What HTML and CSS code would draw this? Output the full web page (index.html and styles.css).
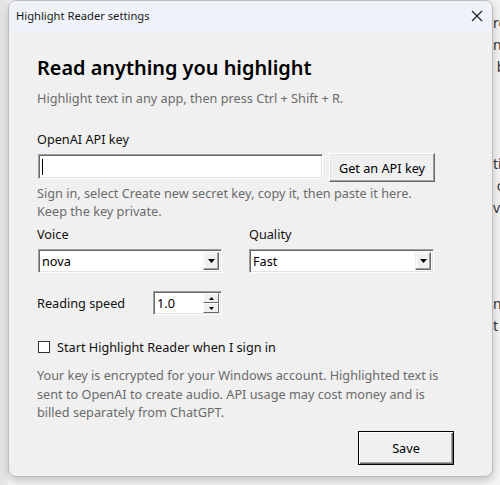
FILE: index.html
```html
<!DOCTYPE html>
<html lang="en">
<head>
<meta charset="utf-8">
<title>Highlight Reader settings</title>
<link rel="stylesheet" href="styles.css">
</head>
<body>
<div class="desk">
  <div class="window">
    <div class="titlebar">
      <span class="title">Highlight Reader settings</span>
      <svg class="close" width="12" height="12" viewBox="0 0 12 12"><path d="M1 1 L11 11 M11 1 L1 11" stroke="#1a1a1a" stroke-width="1.1" fill="none"/></svg>
    </div>
    <div class="content">
      <h1 class="heading">Read anything you highlight</h1>
      <p class="sub">Highlight text in any app, then press Ctrl + Shift + R.</p>

      <div class="label">OpenAI API key</div>
      <div class="key-row">
        <div class="edit key-edit"><span class="caret"></span></div>
        <div class="btn api-btn">Get an API key</div>
      </div>
      <p class="hint">Sign in, select Create new secret key, copy it, then paste it here.<br>Keep the key private.</p>

      <div class="pair">
        <div class="field">
          <div class="label">Voice</div>
          <div class="combo"><span class="combo-text">nova</span><span class="drop"><svg width="7" height="4" viewBox="0 0 7 4"><path d="M0 0 H7 L3.5 4 Z" fill="#000"/></svg></span></div>
        </div>
        <div class="field">
          <div class="label">Quality</div>
          <div class="combo"><span class="combo-text">Fast</span><span class="drop"><svg width="7" height="4" viewBox="0 0 7 4"><path d="M0 0 H7 L3.5 4 Z" fill="#000"/></svg></span></div>
        </div>
      </div>

      <div class="speed-row">
        <span class="speed-label">Reading speed</span>
        <div class="spin">
          <span class="spin-text">1.0</span>
          <span class="spin-btns">
            <span class="spin-btn"><svg width="5" height="3" viewBox="0 0 5 3"><path d="M0 3 H5 L2.5 0 Z" fill="#000"/></svg></span>
            <span class="spin-btn"><svg width="5" height="3" viewBox="0 0 5 3"><path d="M0 0 H5 L2.5 3 Z" fill="#000"/></svg></span>
          </span>
        </div>
      </div>

      <label class="check-row"><span class="checkbox"></span><span>Start Highlight Reader when I sign in</span></label>

      <p class="footer">Your key is encrypted for your Windows account. Highlighted text is sent to OpenAI to create audio. API usage may cost money and is billed separately from ChatGPT.</p>

      <div class="actions"><div class="btn save-btn">Save</div></div>
    </div>
  </div>
  <div class="behind">
    <div class="bl b1">re</div>
    <div class="bl">n</div>
    <div class="bl">&nbsp;b</div>
    <div class="bl b2">ti</div>
    <div class="bl">&nbsp;c</div>
    <div class="bl">va</div>
    <div class="bl b3">n</div>
    <div class="bl">t c</div>
  </div>
</div>
</body>
</html>
```

FILE: styles.css
```css
* { box-sizing: border-box; }
html, body { margin: 0; padding: 0; }
body {
  width: 500px;
  height: 485px;
  overflow: hidden;
  background: #f3f3f3;
  font-family: "Noto Sans", "Open Sans", sans-serif;
}
.desk {
  display: flex;
  height: 485px;
  padding-left: 8px;
  background: linear-gradient(to right, #e4e4e4 0, #ececec 8px, #f4f4f4 8px);
}
.window {
  width: 485px;
  height: 477px;
  margin-top: 0;
  flex: none;
  border: 1px solid #bdbdbd;
  border-radius: 8px;
  background: #f0f0f0;
  box-shadow: 0 3px 10px rgba(0,0,0,0.22);
  overflow: hidden;
  position: relative;
  z-index: 1;
  display: flex;
  flex-direction: column;
}
.titlebar {
  height: 31px;
  background: #eff2f9;
  display: flex;
  align-items: center;
  justify-content: space-between;
  padding: 0 9px 0 7px;
  flex: none;
}
.title {
  font-size: 11.2px;
  color: #1a1a1a;
  margin-top: -2px;
}
.close { margin-top: -2px; }
.content {
  padding: 22px 0 0 28px;
  display: flex;
  flex-direction: column;
  align-items: flex-start;
  font-size: 12.7px;
  color: #111;
}
.heading {
  margin: 0;
  font-size: 19.9px;
  font-weight: 600;
  line-height: 28px;
  color: #000;
}
.sub {
  margin: 7px 0 0;
  line-height: 18px;
  color: #6b6b6b;
}
.label {
  line-height: 18px;
  color: #111;
}
.content > .label { margin-top: 23px; }
.key-row {
  display: flex;
  align-items: flex-start;
  gap: 6px;
  margin-top: 5px;
}
.edit {
  background: #fff;
  border-style: solid;
  border-width: 1px;
  border-color: #a0a0a0 #fff #fff #a0a0a0;
  box-shadow: inset 1px 1px 0 #696969, inset -1px -1px 0 #e3e3e3;
}
.key-edit {
  width: 285px;
  height: 25px;
  margin: 1px 0 0 1px;
  padding: 4px 3px;
}
.caret {
  display: block;
  width: 1px;
  height: 16px;
  background: #000;
}
.btn {
  background: #f0f0f0;
  border-style: solid;
  border-width: 1px;
  border-color: #fff #696969 #696969 #fff;
  box-shadow: inset -1px -1px 0 #a0a0a0, inset 1px 1px 0 #e3e3e3;
  display: flex;
  align-items: center;
  justify-content: center;
  color: #000;
  font-size: 12.7px;
}
.api-btn {
  width: 106px;
  height: 29px;
}
.hint {
  margin: 2px 0 0;
  line-height: 18px;
  color: #6b6b6b;
}
.pair {
  display: flex;
  gap: 27px;
  margin-top: 5px;
}
.field .label { margin-bottom: 6px; }
.combo {
  width: 184px;
  height: 24px;
  background: #fff;
  border-style: solid;
  border-width: 1px;
  border-color: #a0a0a0 #fff #fff #a0a0a0;
  box-shadow: inset 1px 1px 0 #696969, inset -1px -1px 0 #e3e3e3;
  display: flex;
  align-items: center;
  justify-content: space-between;
  padding: 2px 2px 2px 3px;
  margin-left: 1px;
}
.field + .field .combo { margin-left: 0; width: 185px; }
.combo-text { color: #000; }
.drop {
  width: 16px;
  height: 18px;
  background: #f0f0f0;
  border-style: solid;
  border-width: 1px;
  border-color: #f0f0f0 #696969 #696969 #f0f0f0;
  box-shadow: inset -1px -1px 0 #a0a0a0, inset 1px 1px 0 #fff;
  display: flex;
  align-items: center;
  justify-content: center;
}
.speed-row {
  display: flex;
  align-items: center;
  margin-top: 18px;
}
.speed-label {
  width: 116px;
  color: #111;
}
.spin {
  width: 69px;
  height: 24px;
  background: #fff;
  border-style: solid;
  border-width: 1px;
  border-color: #a0a0a0 #fff #fff #a0a0a0;
  box-shadow: inset 1px 1px 0 #696969, inset -1px -1px 0 #e3e3e3;
  display: flex;
  align-items: center;
  justify-content: space-between;
  padding: 2px 2px 2px 3px;
}
.spin-text { color: #000; }
.spin-btns {
  display: flex;
  flex-direction: column;
  width: 16px;
  height: 20px;
}
.spin-btn {
  flex: 1;
  background: #f0f0f0;
  border-style: solid;
  border-width: 1px;
  border-color: #fff #696969 #696969 #fff;
  display: flex;
  align-items: center;
  justify-content: center;
}
.check-row {
  display: flex;
  align-items: center;
  gap: 7px;
  margin-top: 23px;
  line-height: 18px;
  color: #111;
}
.checkbox {
  width: 12px;
  height: 12px;
  border: 1px solid #333;
  background: #fff;
  margin-left: 1px;
}
.footer {
  margin: 10px 0 0;
  width: 402px;
  line-height: 18.5px;
  color: #6b6b6b;
}
.actions {
  align-self: stretch;
  display: flex;
  justify-content: flex-end;
  margin-top: 9px;
  padding-right: 38px;
}
.save-btn {
  width: 96px;
  height: 34px;
  border: 1px solid #000;
  box-shadow: inset 1px 1px 0 #fff, inset -1px -1px 0 #696969, inset -2px -2px 0 #a0a0a0;
}
.behind {
  flex: 1;
  overflow: hidden;
  padding-top: 12px;
  font-size: 14px;
  color: #333;
  white-space: nowrap;
}
.bl { line-height: 22px; }
.b2 { margin-top: 75px; }
.b3 { margin-top: 74px; }
```
